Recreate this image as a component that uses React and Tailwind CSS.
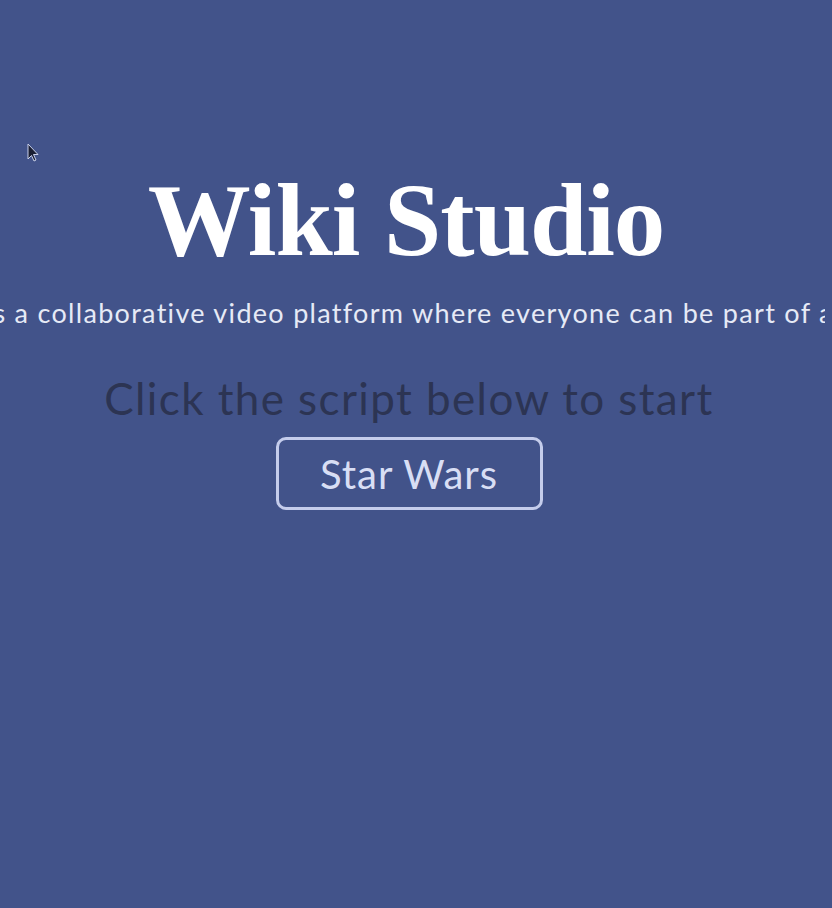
export default function App() {
  return (
    <div className="relative w-[832px] h-[908px] overflow-hidden bg-[#42538a] flex flex-col items-center pr-[14px]">
      <svg className="absolute left-[27px] top-[143px]" width="14" height="22" viewBox="0 0 14 22">
        <path d="M1 1 L1 16 L4.5 12.5 L7 18 L9 17 L6.5 11.5 L11 11.5 Z" fill="#1a1f33" stroke="#c9d0ea" strokeWidth="1" />
      </svg>
      <h1 className="mt-[160px] mr-[6px] text-white text-[103px] leading-[120px] font-bold tracking-[-1px] [font-family:'Liberation_Serif',serif]">
        Wiki Studio
      </h1>
      <div className="mt-[16px] w-[832px] shrink-0 flex justify-center overflow-hidden">
        <p className="ml-[-64px] whitespace-nowrap text-[#e6eaf6] text-[27px] leading-[34px] tracking-[1.3px] [font-family:Lato,sans-serif]">
          Wiki Studio is a collaborative video platform where everyone can be part of a movie.
        </p>
      </div>
      <p className="mt-[42px] text-[#2c3453] text-[44px] leading-[52px] tracking-[1.4px] [font-family:Lato,sans-serif]">
        Click the script below to start
      </p>
      <button className="mt-[13px] w-[267px] h-[73px] rounded-[10px] border-[3px] border-[#c5cdec] text-[#d8def4] text-[40px] tracking-[1px] [font-family:Lato,sans-serif]">
        Star Wars
      </button>
    </div>
  );
}
